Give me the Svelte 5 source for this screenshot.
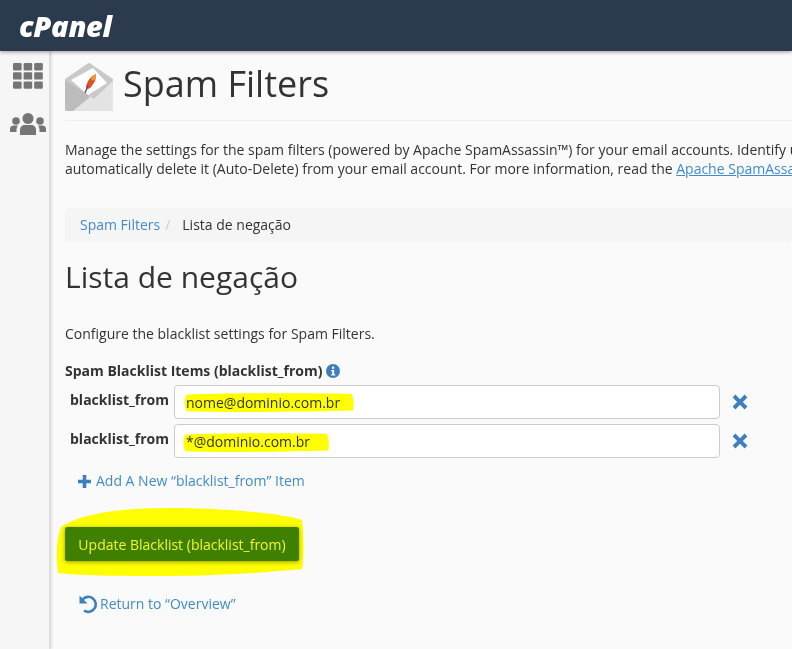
<script>
	let items = $state(['nome@dominio.com.br', '*@dominio.com.br']);
</script>

<div class="page">
	<header class="topbar">
		<span class="logo">cPanel</span>
	</header>

	<div class="body">
		<nav class="side">
			<svg class="grid" width="30" height="26" viewBox="0 0 30 26" fill="#757575">
				<rect x="0" y="0" width="8.6" height="7.4" rx="1.2" />
				<rect x="10.6" y="0" width="8.6" height="7.4" rx="1.2" />
				<rect x="21.2" y="0" width="8.6" height="7.4" rx="1.2" />
				<rect x="0" y="9.2" width="8.6" height="7.4" rx="1.2" />
				<rect x="10.6" y="9.2" width="8.6" height="7.4" rx="1.2" />
				<rect x="21.2" y="9.2" width="8.6" height="7.4" rx="1.2" />
				<rect x="0" y="18.4" width="8.6" height="7.4" rx="1.2" />
				<rect x="10.6" y="18.4" width="8.6" height="7.4" rx="1.2" />
				<rect x="21.2" y="18.4" width="8.6" height="7.4" rx="1.2" />
			</svg>
			<svg class="users" width="36" height="22" viewBox="0 0 36 22" fill="#757575">
				<circle cx="18" cy="5.5" r="5.5" />
				<circle cx="6" cy="8" r="3.8" />
				<circle cx="30" cy="8" r="3.8" />
				<path d="M10 22v-5c0-3 2-5 5-5h6c3 0 5 2 5 5v5z" />
				<path d="M0 19v-3c0-2 1.500-3.500 3.500-3.500h4.500c-.8 1-1.500 2.500-1.500 4.500v2z" />
				<path d="M36 19v-3c0-2-1.500-3.500-3.500-3.500h-4.500c.8 1 1.500 2.500 1.500 4.500v2z" />
			</svg>
		</nav>

		<main class="content">
			<div class="title">
				<svg width="48" height="48" viewBox="0 0 48 48">
					<path d="M0 16 22 1a3 3 0 0 1 4 0l22 15v30a2 2 0 0 1-2 2H2a2 2 0 0 1-2-2z" fill="#c9c9c9" />
					<path d="M6 17 28 5l14 15-19 12z" fill="#fff" />
					<path d="M48 18v28a2 2 0 0 1-2 2H8l15-16 6 4z" fill="#e4e4e4" />
					<path d="M0 17l23 15 2 2L8 48H2a2 2 0 0 1-2-2z" fill="#bcbcbc" />
					<path d="M21 24c1-6 5-11 10-13 0 5-1 8-3 10-1 3-4 5-6 5z" fill="#d9542b" />
					<path d="M26 16c1.500-2.500 3-4 5-5 0 2.500-1 5-2.500 7z" fill="#f0a030" />
					<path d="M20 30l3-7" stroke="#7a3a6a" stroke-width="1.300" />
				</svg>
				<h1>Spam Filters</h1>
			</div>

			<p class="desc">
				Manage the settings for the spam filters (powered by Apache SpamAssassin™) for your email accounts. Identify unsolicited email and<br />
				automatically delete it (Auto-Delete) from your email account. For more information, read the <a href="#docs">Apache SpamAssassin documentation</a>.
			</p>

			<ol class="crumbs">
				<li><a href="#filters">Spam Filters</a></li>
				<li class="active">Lista de negação</li>
			</ol>

			<h2>Lista de negação</h2>
			<p class="intro">Configure the blacklist settings for Spam Filters.</p>

			<div class="group-label">
				Spam Blacklist Items (blacklist_from)
				<svg width="14" height="14" viewBox="0 0 14 14">
					<circle cx="7" cy="7" r="7" fill="#3d7ebb" />
					<rect x="6" y="2.600" width="2.200" height="2.200" fill="#fff" />
					<path d="M5.200 6h3v4.200h1v1.200H5.200v-1.200h1V7.200h-1z" fill="#fff" />
				</svg>
			</div>

			{#each items as item, i}
				<div class="row">
					<label for={`item-${i}`}>blacklist_from</label>
					<div class="field">
						<input id={`item-${i}`} value={item} />
						<svg class={`mark mark-${i}`} viewBox="0 0 180 24" preserveAspectRatio="none">
							<path d="M4 3C40 1 130 1 176 2c3 5 3 14 2 19-50 1-120 3-174 1C1 16 1 8 4 3z" fill="#ffff00" />
						</svg>
					</div>
					<svg class="remove" width="16" height="16" viewBox="0 0 16 16">
						<path d="M3.400.6 8 5.200 12.600.6 15.400 3.400 10.800 8l4.600 4.600-2.800 2.800L8 10.800l-4.600 4.600L.6 12.600 5.200 8 .6 3.400z" fill="#3d80bd" />
					</svg>
				</div>
			{/each}

			<a class="add" href="#add">
				<svg width="13" height="13" viewBox="0 0 13 13">
					<path d="M4.700 0h3.600v4.700H13v3.600H8.300V13H4.700V8.300H0V4.700h4.700z" fill="#3d80bd" />
				</svg>
				Add A New “blacklist_from” Item
			</a>

			<div class="submit">
				<svg class="blob" viewBox="0 0 248 70" preserveAspectRatio="none">
					<path d="M5 20C22 8 60 1 110 1c50 0 110 4 136 12 2 15 2 38 0 49-40 4-90 7-130 7-40 0-90 0-114-3C0 50 0 34 5 20z" fill="#ffff00" />
				</svg>
				<button type="button">Update Blacklist (blacklist_from)</button>
			</div>

			<a class="back" href="#overview">
				<svg width="20" height="20" viewBox="0 0 20 20" fill="none">
					<path d="M4.500 5.500A7.500 7.500 0 1 1 6 16.500" stroke="#3d80bd" stroke-width="2.600" />
					<path d="M1.500 1.500v8h8z" fill="#3d80bd" />
				</svg>
				Return to “Overview”
			</a>
		</main>
	</div>
</div>

<style>
	:global(body) {
		margin: 0;
		overflow: hidden;
	}

	.page {
		width: 792px;
		height: 649px;
		overflow: hidden;
		display: flex;
		flex-direction: column;
		font-family: "Open Sans", sans-serif;
		font-size: 14px;
		color: #333;
		background: #fafafa;
	}

	.topbar {
		position: relative;
		z-index: 2;
		flex: none;
		height: 51px;
		padding-left: 19px;
		display: flex;
		align-items: center;
		background: #2b3a4c;
		box-shadow: 0 1px 4px rgba(0, 0, 0, 0.4);
	}

	.logo {
		font-family: "Open Sans", sans-serif;
		font-size: 29px;
		font-weight: 800;
		font-style: italic;
		letter-spacing: -0.3px;
		color: #fff;
	}

	.body {
		flex: 1;
		display: flex;
		min-height: 0;
	}

	.side {
		flex: none;
		width: 49px;
		padding-top: 12px;
		display: flex;
		flex-direction: column;
		align-items: center;
		gap: 24px;
		background: #f6f6f6;
		border-right: 1px solid #ddd;
		box-shadow: 1px 0 3px rgba(0, 0, 0, 0.18);
	}

	.grid {
		margin-left: 6px;
	}

	.users {
		margin-left: 6px;
	}

	.content {
		flex: 1;
		min-width: 0;
		padding: 12px 0 0 15px;
		white-space: nowrap;
	}

	.title {
		display: flex;
		align-items: center;
		gap: 10px;
		padding-bottom: 9px;
		border-bottom: 1px solid #eee;
	}

	h1 {
		margin: 0;
		font-size: 36px;
		font-weight: 400;
		line-height: 48px;
		color: #333;
		position: relative;
		top: -3px;
	}

	.desc {
		margin: 19px 0 0;
		line-height: 19px;
	}

	a {
		color: #428bca;
		text-decoration: none;
	}

	.desc a {
		text-decoration: underline;
	}

	.crumbs {
		display: flex;
		margin: 30px 0 0;
		padding: 7px 15px;
		list-style: none;
		line-height: 20px;
		background: #f5f5f5;
		border-radius: 4px;
	}

	.crumbs li + li::before {
		content: "/";
		padding: 0 5px;
		color: #ccc;
	}

	.crumbs .active {
		padding-left: 0;
		color: #333;
	}

	.crumbs .active::before {
		padding-right: 12px;
	}

	h2 {
		margin: 14px 0 0;
		font-size: 30px;
		font-weight: 400;
		line-height: 42px;
		color: #333;
	}

	.intro {
		margin: 26px 0 0;
		line-height: 20px;
	}

	.group-label {
		margin-top: 17px;
		display: flex;
		align-items: center;
		gap: 4px;
		font-weight: 700;
		line-height: 20px;
	}

	.row {
		margin-top: 4px;
		width: 684px;
		height: 35px;
		display: flex;
		align-items: flex-start;
		padding-left: 5px;
		box-sizing: border-box;
	}

	.row + .row {
		margin-top: 4px;
	}

	.row label {
		flex: none;
		width: 104px;
		font-weight: 700;
		line-height: 30px;
	}

	.field {
		position: relative;
		flex: none;
		width: 546px;
		height: 34px;
	}

	input {
		width: 100%;
		height: 100%;
		box-sizing: border-box;
		padding: 6px 11px;
		border: 1px solid #ccc;
		border-radius: 4px;
		background: #fff;
		color: #333;
		font: inherit;
		outline: none;
	}

	.mark {
		position: absolute;
		top: 7px;
		left: 9px;
		height: 21px;
		mix-blend-mode: multiply;
		pointer-events: none;
	}

	.mark-0 {
		width: 172px;
	}

	.mark-1 {
		top: 8px;
		left: 8px;
		width: 148px;
	}

	.remove {
		flex: none;
		margin: 9px 0 0 12px;
	}

	.add {
		margin: 12px 0 0 13px;
		display: flex;
		align-items: center;
		gap: 5px;
		line-height: 20px;
	}

	.submit {
		position: relative;
		margin-top: 36px;
		width: 234px;
	}

	.blob {
		position: absolute;
		top: -20px;
		left: -9px;
		width: 248px;
		height: 70px;
	}

	button {
		position: relative;
		display: block;
		width: 234px;
		height: 34px;
		padding: 0;
		border: 0;
		border-radius: 2px;
		background: #3f8000;
		box-shadow: 0 1px 4px rgba(0, 0, 0, 0.4);
		color: #f2f52c;
		font: inherit;
	}

	.back {
		margin: 33px 0 0 13px;
		display: flex;
		align-items: center;
		gap: 2px;
		line-height: 20px;
	}
</style>
